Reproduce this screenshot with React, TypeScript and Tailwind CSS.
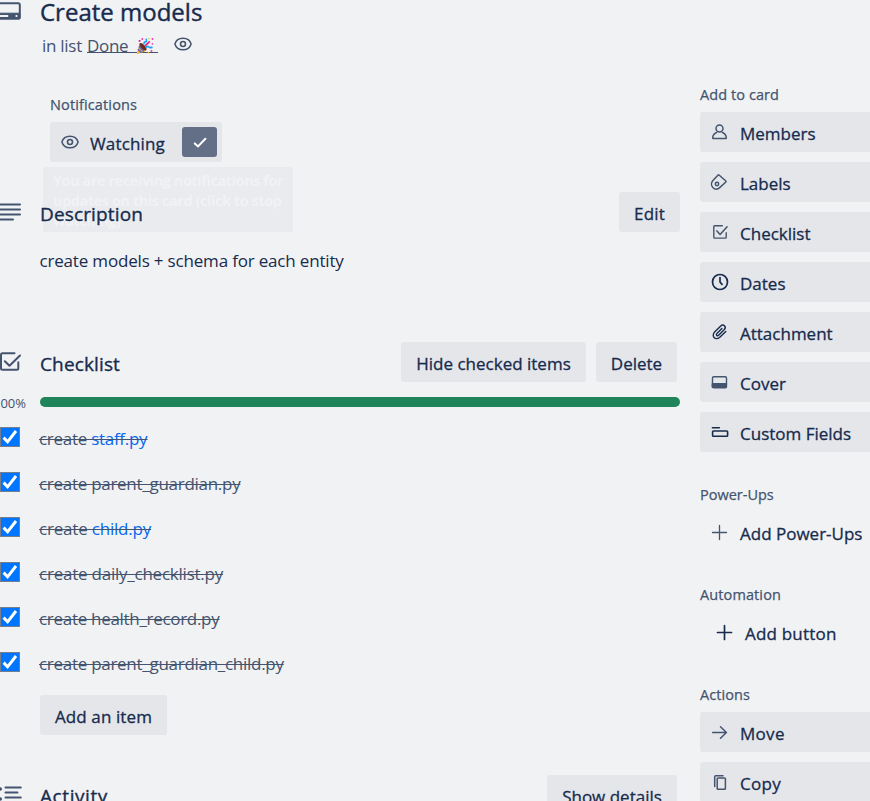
import type { ReactNode } from "react";

function Icon({ children, size = 20, dark = false }: { children: ReactNode; size?: number; dark?: boolean }) {
  return (
    <svg
      width={size}
      height={size}
      viewBox={`0 0 ${size} ${size}`}
      fill="none"
      stroke="currentColor"
      strokeLinecap="round"
      strokeLinejoin="round"
      className={`shrink-0 ${dark ? "text-[#172b4d]" : "text-[#44546f]"}`}
    >
      {children}
    </svg>
  );
}

function Eye() {
  return (
    <Icon>
      <path d="M1.9 10C3 6.3 6.2 4.2 10 4.2S17 6.3 18.1 10C17 13.7 13.8 15.8 10 15.8S3 13.7 1.9 10Z" strokeWidth="1.5" />
      <circle cx="10" cy="10" r="2.5" strokeWidth="1.6" />
    </Icon>
  );
}

function Party() {
  return (
    <svg width="18" height="18" viewBox="0 0 18 18" fill="none" className="shrink-0">
      <path d="M4 6.500.8 15.800c-.2.8.4 1.300 1.200 1.100L10 14Z" fill="#f7b52c" />
      <path d="M2.800 9.400 7.800 14.500M1.900 12.200l3.600 3.400" stroke="#6264d0" strokeWidth="1.600" />
      <ellipse cx="7" cy="9.800" rx="2" ry="4.700" transform="rotate(-43 7 9.800)" fill="#6b2d22" />
      <path d="M8.200 7.400c-.7-2 .2-2.600 1.300-2.500s1.500-1.600.3-3.200" stroke="#1ba1f2" strokeWidth="1.600" />
      <path d="M10 10.600c1-1.700 2.200-1.300 2.900-.6s2 .8 3.600.1" stroke="#1ba1f2" strokeWidth="1.700" />
      <path d="m8.800 9.200 5-4.800" stroke="#ec1a8f" strokeWidth="1.600" />
      <path d="M2.700 3h1.800v1.700H2.700zM15.700 1.200h1.600v1.600h-1.600zM14.600 13.200h1.700v1.500h-1.700zM5.500 1.200h1.600v1.500H5.500zM15.700 6.200h1.500v1.400h-1.500z" fill="#ec1a8f" />
      <path d="M12.300.9h1.300v1.300h-1.300zM11.800 15h1.300v1.300h-1.300z" fill="#f7b52c" />
    </svg>
  );
}

function CheckSquare() {
  return (
    <Icon>
      <path d="M12.300 3.700H4.600c-.5 0-.8.3-.8.8v10.800c0 .5.300.8.800.8h10.800c.5 0 .8-.3.8-.8v-4.500" strokeWidth="1.400" />
      <path d="m6.900 8.900 3.200 3.500 7-7.700" strokeWidth="1.500" />
    </Icon>
  );
}

function Plus({ dark = false }: { dark?: boolean }) {
  return (
    <Icon dark={dark}>
      <path d="M9.500 3.500v14M2.500 10.500h14" strokeWidth={dark ? 1.700 : 1.300} />
    </Icon>
  );
}

function Btn({ children, className }: { children: ReactNode; className: string }) {
  return (
    <div className={`flex h-10 shrink-0 items-center justify-center rounded-[3px] bg-[#e4e6ea] pt-[2px] text-[17px] leading-[25px] font-medium whitespace-nowrap [-webkit-text-stroke:0.3px] ${className}`}>
      {children}
    </div>
  );
}

function SideButton({ icon, label, className = "", plain = false }: { icon: ReactNode; label: string; className?: string; plain?: boolean }) {
  return (
    <div className={`mb-2.5 flex h-10 items-center rounded-l-[3px] pl-2.5 ${plain ? "" : "bg-[#e4e6ea]"}`}>
      {icon}
      <span className={`ml-2.5 pt-[2px] text-[17px] leading-[25px] font-medium whitespace-nowrap [-webkit-text-stroke:0.3px] ${className}`}>{label}</span>
    </div>
  );
}

function SideTitle({ children, className = "" }: { children: string; className?: string }) {
  return <h3 className={`h-[30px] text-[14.5px] leading-[25px] font-medium text-[#44546f] [-webkit-text-stroke:0.25px] ${className}`}>{children}</h3>;
}

function Item({ text, link, className = "tracking-[-0.28px]" }: { text: string; link?: string; className?: string }) {
  return (
    <li className="flex h-[45px] items-start">
      <span className="flex size-5 items-center justify-center border border-[#767d8c] bg-[#0075ff]">
        <svg width="18" height="18" viewBox="0 0 18 18" fill="none" stroke="#fff" strokeWidth="3">
          <path d="m2.600 9.600 4 4.200L15 3" />
        </svg>
      </span>
      <span className={`ml-[19px] text-[17px] leading-[23px] whitespace-pre text-[#44546f] line-through decoration-[#44546f] decoration-1 ${className}`}>
        {text}
        {link && <a className="text-[#0868f0]">{link}</a>}
      </span>
    </li>
  );
}

export default function App() {
  return (
    <div className="flex h-[801px] w-[870px] overflow-hidden bg-[#f1f2f4] font-['Open_Sans','Noto_Sans',sans-serif] text-[#172b4d]">
      <main className="flex w-[680px] shrink-0 flex-col">
        <header className="flex h-[25px] shrink-0">
          <div className="w-10 shrink-0">
            <Icon size={24}>
              <rect x="-3" y="3.200" width="22.800" height="15.600" rx="1.500" strokeWidth="2" />
              <path d="M-3 13.200h22.800v5H-3z" fill="currentColor" strokeWidth="1" />
              <path d="M0 16h7.500M16.300 16h.4" stroke="#f1f2f4" strokeWidth="1.800" />
            </Icon>
          </div>
          <h1 className="text-[24px] leading-[23px] font-medium [-webkit-text-stroke:0.4px]">Create models</h1>
        </header>

        <div className="flex h-[65px] shrink-0 pt-[9px] pl-[42px] text-[17px] text-[#44546f]">
          <span className="w-[45px] leading-[23px] tracking-[-0.27px] whitespace-nowrap">in list</span>
          <span className="flex h-[19px] w-[71px] items-start border-b border-[#44546f]">
            <span className="w-[49px] leading-[23px] tracking-[-0.3px]">Done</span>
            <span className="pt-[3px]"><Party /></span>
          </span>
          <span className="ml-[15px]"><Eye /></span>
        </div>

        <section className="relative h-[102px] shrink-0 pl-[50px]">
          <h3 className="h-8 pt-[2px] text-[14.5px] leading-[25px] font-medium tracking-[0.13px] text-[#44546f] [-webkit-text-stroke:0.25px]">Notifications</h3>
          <div className="flex h-10 w-[172px] items-center rounded-[3px] bg-[#e4e6ea] pl-2.5">
            <Eye />
            <span className="ml-2.5 w-[92px] pt-[2px] text-[17px] leading-[25px] font-medium tracking-[0.16px] [-webkit-text-stroke:0.3px]">Watching</span>
            <span className="flex h-[30px] w-[35px] items-center justify-center rounded-[3px] bg-[#626f86]">
              <svg width="20" height="20" viewBox="0 0 20 20" fill="none" stroke="#fff" strokeWidth="2" strokeLinecap="round">
                <path d="m4.800 11.400 3.200 3 7.400-7.600" />
              </svg>
            </span>
          </div>
          <div className="absolute top-[77px] left-[43px] h-[65px] w-[250px] overflow-hidden rounded-[3px] bg-[#e9ebee] pt-1 pl-2.5 text-[14.5px] leading-5 font-bold tracking-[-0.44px] whitespace-nowrap text-[#f1f2f4]">
            You are receiving notifications for
            <br />
            updates on this card (click to stop
            <br />
            watching)
          </div>
        </section>

        <section className="h-[150px] shrink-0">
          <div className="relative flex h-10 items-center">
            <div className="w-10 shrink-0">
              <Icon size={24}>
                <path d="M-2 4.500h22M-2 9.500h22M-2 14.500h22M-2 19.500h15" strokeWidth="2" />
              </Icon>
            </div>
            <h2 className="flex-1 pt-[4px] text-[19px] leading-[25px] font-medium tracking-[0.14px] [-webkit-text-stroke:0.35px]">Description</h2>
            <Btn className="w-[61px] tracking-[0.2px]">Edit</Btn>
          </div>
          <p className="pt-4 pl-[39.5px] text-[17px] leading-[25px] tracking-[-0.18px]">create models + schema for each entity</p>
        </section>

        <section className="h-[433px] shrink-0">
          <div className="flex h-10 items-center pr-[3px]">
            <div className="w-10 shrink-0">
              <Icon size={24}>
                <path d="M14.500 3.200H2.500C1.500 3.200 1 3.700 1 4.700v13.600c0 1 .5 1.500 1.500 1.500h14.300c1 0 1.500-.5 1.500-1.500v-6" strokeWidth="2" />
                <path d="m4.800 11.200 4.700 4.500L20 5.500" strokeWidth="2" />
              </Icon>
            </div>
            <h2 className="flex-1 pt-[4px] text-[19px] leading-[25px] font-medium tracking-[0.13px] [-webkit-text-stroke:0.35px]">Checklist</h2>
            <Btn className="mr-2.5 w-[185px]">Hide checked items</Btn>
            <Btn className="w-[81px]">Delete</Btn>
          </div>
          <div className="flex h-[45px] items-start">
            <span className="flex w-10 shrink-0 justify-end overflow-hidden pt-[11px] pr-3.5 text-[13px] leading-5 text-[#44546f]">100%</span>
            <div className="mt-[15px] h-2.5 flex-1 rounded-full bg-[#1f845a]" />
          </div>
          <ul className="h-[268px]">
            <Item text="create " link="staff.py" />
            <Item text="create parent_guardian.py" />
            <Item text="create " link="child.py" className="tracking-[-0.2px]" />
            <Item text="create daily_checklist.py" className="tracking-[-0.23px]" />
            <Item text="create health_record.py" className="tracking-[-0.3px]" />
            <Item text="create parent_guardian_child.py" />
          </ul>
          <Btn className="ml-10 w-[127px] tracking-[0.1px]">Add an item</Btn>
        </section>

        <section className="flex h-10 shrink-0 items-center pr-[3px]">
          <div className="w-10 shrink-0">
            <Icon size={24}>
              <path d="M5.500 4.500h15.300M5.500 9.500h12M5.500 14.500h15.300" strokeWidth="2" />
              <path d="M0 6h.3M0 16h.3" strokeWidth="3.500" />
            </Icon>
          </div>
          <h2 className="flex-1 pt-[3px] text-[19px] leading-[25px] font-medium tracking-[0.59px] [-webkit-text-stroke:0.35px]">Activity</h2>
          <Btn className="w-[130px]">Show details</Btn>
        </section>
      </main>

      <aside className="ml-5 w-[170px] shrink-0 pt-[82px]">
        <SideTitle className="tracking-[0.08px]">Add to card</SideTitle>
        <SideButton
          label="Members"
          icon={
            <Icon>
              <circle cx="9.500" cy="6.500" r="3.500" strokeWidth="1.500" />
              <path d="M6.600 10.500c-2.300.9-3.700 2.400-3.900 5.200-.1.600.3.900.8.900h12c.5 0 .9-.3.800-.9-.2-2.800-1.600-4.300-3.900-5.200" strokeWidth="1.500" />
            </Icon>
          }
        />
        <SideButton
          label="Labels"
          icon={
            <Icon>
              <path d="m2.900 8.400 5-5.200c.5-.5.9-.5 1.400 0l6.300 5.500c.5.500.5 1 0 1.500l-5.600 5.200c-2.300 2.200-5.100 2.200-7 .3s-2-5.100-.1-7.300Z" strokeWidth="1.500" />
              <circle cx="7" cy="12" r="1.700" strokeWidth="1.500" />
            </Icon>
          }
        />
        <SideButton label="Checklist" icon={<CheckSquare />} />
        <SideButton
          label="Dates"
          icon={
            <Icon dark>
              <circle cx="10" cy="10" r="7.500" strokeWidth="1.700" />
              <path d="M10 5.500V10l2 2.400" strokeWidth="1.700" />
            </Icon>
          }
        />
        <SideButton
          label="Attachment"
          icon={
            <Icon dark>
              <path
                d="m15.800 9.400-5.700 5.700c-1.900 1.900-4.500 2-5.900.6s-1.300-4 .6-5.900l5.700-5.600c1.300-1.300 3-1.400 4-.4s.9 2.700-.4 4l-5.500 5.500c-.6.600-1.400.7-1.900.2s-.4-1.300.2-1.900l5-5"
                strokeWidth="1.400"
              />
            </Icon>
          }
        />
        <SideButton
          label="Cover"
          icon={
            <Icon>
              <rect x="2.500" y="4.700" width="14" height="11" rx="1.300" strokeWidth="1.400" />
              <path d="M2.500 11.500h14v4h-14z" fill="currentColor" strokeWidth="1" />
            </Icon>
          }
        />
        <SideButton
          label="Custom Fields"
          icon={
            <Icon dark>
              <path d="M2.400 5.700h7" strokeWidth="1.500" />
              <rect x="2.600" y="9" width="15" height="5.200" rx=".8" strokeWidth="1.600" />
            </Icon>
          }
        />
        <div className="h-5" />
        <SideTitle>Power-Ups</SideTitle>
        <SideButton plain label="Add Power-Ups" icon={<Plus />} />
        <div className="h-5" />
        <SideTitle className="tracking-[0.11px]">Automation</SideTitle>
        <div className="pl-[5px]">
          <SideButton plain label="Add button" className="tracking-[0.2px]" icon={<Plus dark />} />
        </div>
        <div className="h-5" />
        <SideTitle className="tracking-[0.08px]">Actions</SideTitle>
        <SideButton
          label="Move"
          className="tracking-[0.3px]"
          icon={
            <Icon>
              <path d="M2.700 10.500h13.600M10.500 4.700l5.900 5.800-5.900 5.800" strokeWidth="1.500" />
            </Icon>
          }
        />
        <SideButton
          label="Copy"
          className="tracking-[0.29px]"
          icon={
            <Icon>
              <path d="M4.700 14.500V4.800c0-.6.400-1 1-1h7.300" strokeWidth="1.500" />
              <rect x="7.200" y="6" width="8.200" height="11.300" rx=".8" strokeWidth="1.500" />
            </Icon>
          }
        />
      </aside>
    </div>
  );
}
